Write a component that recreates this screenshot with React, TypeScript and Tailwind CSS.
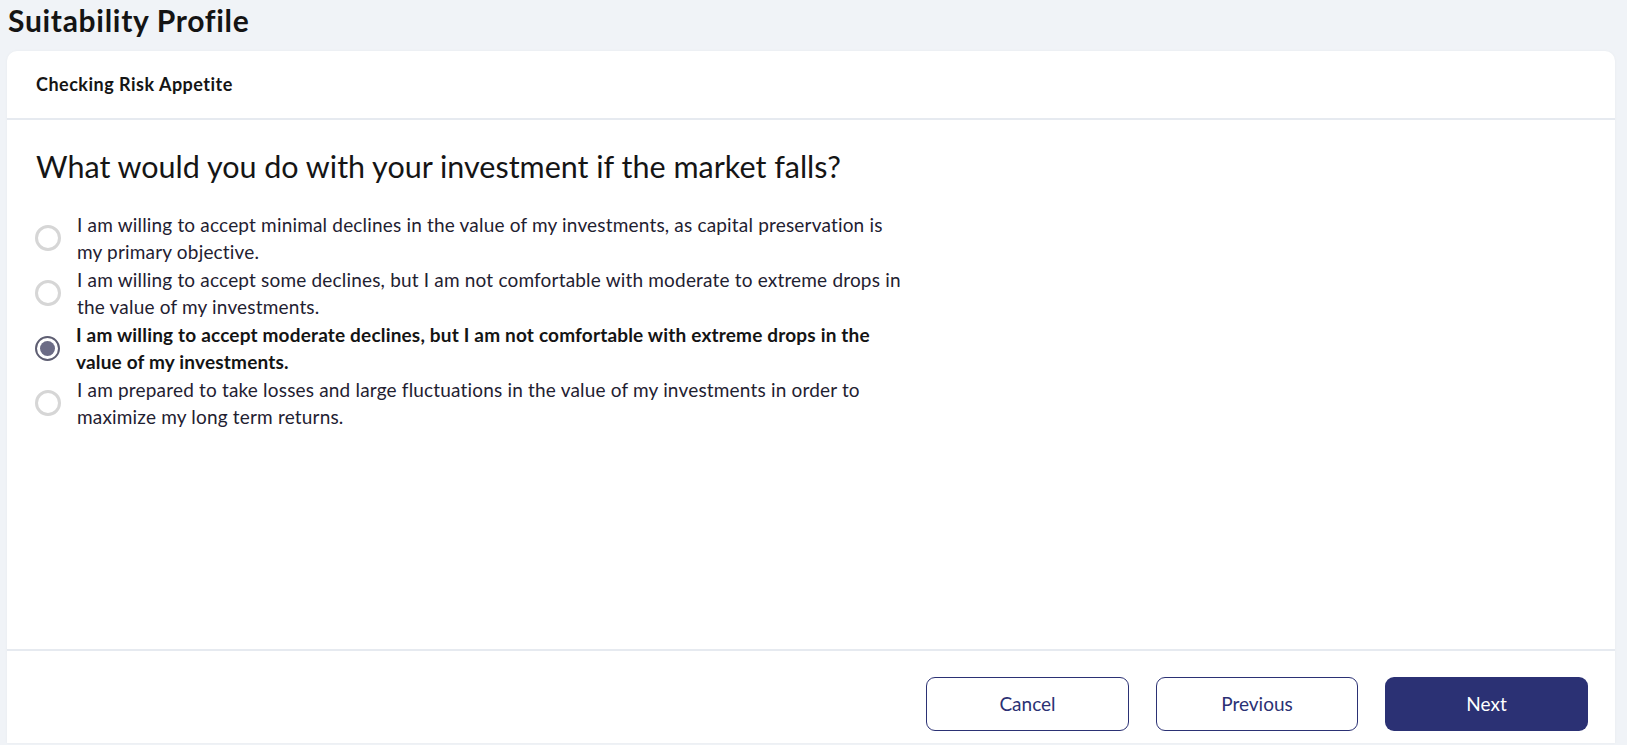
import { useState } from "react"

const options = [
  "I am willing to accept minimal declines in the value of my investments, as capital preservation is my primary objective.",
  "I am willing to accept some declines, but I am not comfortable with moderate to extreme drops in the value of my investments.",
  "I am willing to accept moderate declines, but I am not comfortable with extreme drops in the value of my investments.",
  "I am prepared to take losses and large fluctuations in the value of my investments in order to maximize my long term returns.",
]

function Radio({ checked }: { checked: boolean }) {
  if (checked) {
    return (
      <span className="flex h-[25px] w-[25px] shrink-0 items-center justify-center rounded-full border-2 border-[#5e5e72] bg-white">
        <span className="h-[15px] w-[15px] rounded-full bg-[#6c6c86]" />
      </span>
    )
  }
  return <span className="h-[26px] w-[26px] shrink-0 rounded-full border-[3px] border-[#d6d6d6] bg-white" />
}

export default function App() {
  const [selected, setSelected] = useState(2)

  return (
    <div
      className="flex h-screen flex-col bg-[#f0f3f7] pl-[7px] pr-[12px]"
      style={{ fontFamily: "Lato, 'Noto Sans', sans-serif" }}
    >
      {/* Page title */}
      <h1 className="flex h-[51px] items-start pl-[1px] text-[30px] font-bold leading-[40px] tracking-[0.7px] text-[#141414]">
        Suitability Profile
      </h1>

      {/* Card */}
      <div className="mb-[2px] flex flex-1 flex-col rounded-t-[10px] bg-white shadow-[0_0_3px_rgba(0,0,0,0.04)]">
        <div className="flex h-[69px] items-center border-b-2 border-[#e6eaf0] px-[29px]">
          <span className="text-[18px] font-bold tracking-[0.5px] text-[#151515]">Checking Risk Appetite</span>
        </div>

        <div className="flex-1 px-[28px] pt-[28px]">
          <h2 className="pl-[1px] text-[30.5px] leading-[36px] text-[#151515]">
            What would you do with your investment if the market falls?
          </h2>

          <div className="mt-[27px] flex flex-col gap-[1px]">
            {options.map((text, i) => (
              <label
                key={i}
                className="flex cursor-pointer items-center gap-[16px]"
                onClick={() => setSelected(i)}
              >
                <Radio checked={selected === i} />
                <span
                  className={
                    "max-w-[824px] text-[19px] leading-[27px] tracking-[0.18px] " +
                    (selected === i ? "font-bold text-[#141414]" : "text-[#1f2131]")
                  }
                >
                  {text}
                </span>
              </label>
            ))}
          </div>
        </div>

        {/* Footer actions */}
        <div className="flex justify-end gap-[27px] border-t-2 border-[#e6eaf0] pb-[12px] pr-[27px] pt-[26px]">
          <button className="h-[54px] w-[203px] rounded-[9px] border border-[#2b3174] bg-white text-[19px] text-[#2b3174]">
            Cancel
          </button>
          <button className="h-[54px] w-[202px] rounded-[9px] border border-[#2b3174] bg-white text-[19px] text-[#2b3174]">
            Previous
          </button>
          <button className="h-[54px] w-[203px] rounded-[9px] bg-[#2b3174] text-[19px] text-white">
            Next
          </button>
        </div>
      </div>
    </div>
  )
}
